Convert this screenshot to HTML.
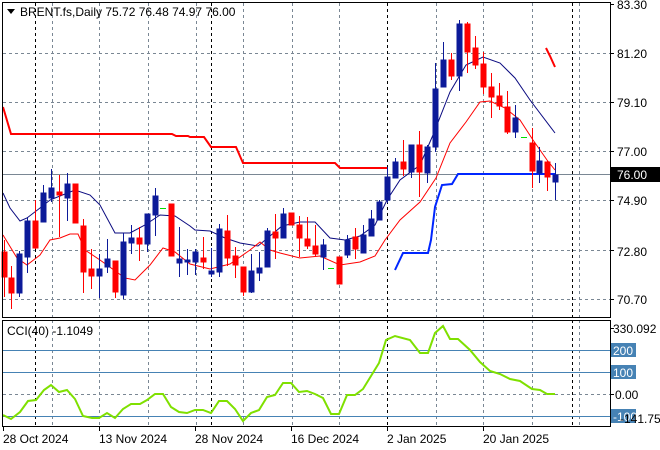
<!DOCTYPE html>
<html><head><meta charset="utf-8"><style>
html,body{margin:0;padding:0;background:#fff;width:660px;height:450px;overflow:hidden}
svg{display:block;font-family:"Liberation Sans",sans-serif}
</style></head><body>
<svg width="660" height="450" viewBox="0 0 660 450" xmlns="http://www.w3.org/2000/svg">
<rect width="660" height="450" fill="#fff"/>
<!-- grid main -->
<g stroke="#7a8794" stroke-width="1" stroke-dasharray="3,3" fill="none">
<path d="M3 53.5H610M3 102.5H610M3 151.5H610M3 200.5H610M3 250.5H610M3 299.5H610"/>
<path d="M52.5 3V317M99.5 3V317M148.5 3V317M196.5 3V317M243.5 3V317M292.5 3V317M339.5 3V317M436.5 3V317M483.5 3V317M532.5 3V317M579.5 3V317"/>
<path d="M52.5 320V426M99.5 320V426M148.5 320V426M196.5 320V426M243.5 320V426M292.5 320V426M339.5 320V426M436.5 320V426M483.5 320V426M532.5 320V426M579.5 320V426M3 394.5H610"/>
</g>
<g stroke="#000" stroke-width="1" stroke-dasharray="3,3">
<path d="M35.5 3V317M211.5 3V317M387.5 3V317M572.5 3V317M35.5 320V426M211.5 320V426M387.5 320V426M572.5 320V426"/>
</g>
<!-- 76 line -->
<path d="M3 174.5H610" stroke="#7a8794" stroke-width="1"/>
<!-- thick red step -->
<polyline fill="none" stroke="#f00" stroke-width="2" points="3,107 11,134 172,134 176,136 188,136 190,137 204,137 211,147 236,147 243,163 335,163 340,168 387,168"/>
<path d="M546 48 L550 56 L555 67" stroke="#f00" stroke-width="2" fill="none"/>
<!-- thick blue step -->
<polyline fill="none" stroke="#0026ff" stroke-width="2" points="395,270 403,253 428,253 431,240 435,207 442,185 452,184 458,174 555,174"/>
<!-- blue MA -->
<polyline fill="none" stroke="#0a0a80" stroke-width="1" points="3,193 10,208 20,221 27,218 40,208 50,200 60,196 75,190 90,195 100,205 115,233 130,233 145,225 160,215 175,216 190,226 195,230 210,231 225,238 240,243 258,246 270,236 282,226 300,222 315,222 330,238 345,240 360,236 375,225 387,200 400,180 420,165 433,135 450,92 466,65 483,57 500,63 515,78 530,100 555,133"/>
<!-- red MA -->
<polyline fill="none" stroke="#f00" stroke-width="1" points="3,235 17,258 27,265 40,255 50,240 60,238 70,234 78,234 85,250 100,260 125,278 135,280 150,265 163,248 175,252 190,264 210,269 230,264 250,250 260,242 270,250 280,253 300,258 320,256 340,265 360,262 375,256 385,240 400,220 420,202 436,178 450,143 466,122 480,102 490,101 505,108 520,120 533,140 547,160 555,170"/>
<!-- candles -->
<g stroke-width="1">
<g stroke="#f00" fill="#f00">
<path d="M4.5 240V297M11.5 266V309M35.5 200V249M59.5 175V237M75.5 184V222M83.5 219V293M91.5 249V289M115.5 261V298M139.5 227V261M171.5 204V256M203.5 237V269M227.5 215V266M235.5 247V278M243.5 267V296M275.5 214V259M291.5 213V220M299.5 216V257M307.5 217V249M315.5 225V256M339.5 257V284M355.5 228V259M403.5 140V176M419.5 131V197M451.5 53V80M467.5 22V73M475.5 36V69M483.5 52V94M491.5 73V118M499.5 83V110M507.5 91V134M532.5 128V188M547.5 161V191"/>
<rect x="2" y="252" width="5" height="25"/><rect x="9" y="278" width="5" height="15"/><rect x="33" y="221" width="5" height="27"/><rect x="57" y="192" width="5" height="3"/><rect x="73" y="184" width="5" height="39"/><rect x="81" y="226" width="5" height="46"/><rect x="89" y="269" width="5" height="7"/><rect x="113" y="261" width="5" height="31"/><rect x="137" y="238" width="5" height="6"/><rect x="169" y="204" width="5" height="52"/><rect x="201" y="258" width="5" height="4"/><rect x="225" y="231" width="5" height="27"/><rect x="233" y="256" width="5" height="9"/><rect x="241" y="267" width="5" height="25"/><rect x="273" y="232" width="5" height="6"/><rect x="289" y="213" width="5" height="12"/><rect x="297" y="225" width="5" height="13"/><rect x="305" y="239" width="5" height="7"/><rect x="313" y="246" width="5" height="8"/><rect x="337" y="257" width="5" height="27"/><rect x="353" y="237" width="5" height="12"/><rect x="401" y="162" width="5" height="7"/><rect x="417" y="145" width="5" height="27"/><rect x="449" y="60" width="5" height="16"/><rect x="465" y="24" width="5" height="28"/><rect x="473" y="48" width="5" height="17"/><rect x="481" y="64" width="5" height="23"/><rect x="489" y="87" width="5" height="10"/><rect x="497" y="96" width="5" height="10"/><rect x="505" y="107" width="5" height="25"/><rect x="530" y="143" width="5" height="28"/><rect x="545" y="162" width="5" height="15"/>
</g>
<g stroke="#0c1a99" fill="#0c1a99">
<path d="M19.5 251V297M27.5 217V273M43.5 185V222M51.5 169V202M67.5 173V221M99.5 254V298M107.5 239V273M123.5 233V299M131.5 225V254M147.5 214V252M155.5 188V236M179.5 227V277M187.5 249V275M195.5 249V275M211.5 248V277M219.5 224V277M251.5 254V293M259.5 252V281M267.5 228V267M283.5 208V238M323.5 239V270M347.5 235V258M363.5 225V253M371.5 210V236M379.5 200V220M387.5 167V203M395.5 158V178M411.5 145V178M427.5 145V183M435.5 63V152M443.5 42V87M459.5 20V91M515.5 105V138M539.5 147V183M555.5 163V200"/>
<rect x="17" y="254" width="5" height="39"/><rect x="25" y="221" width="5" height="36"/><rect x="41" y="193" width="5" height="29"/><rect x="49" y="188" width="5" height="10"/><rect x="65" y="184" width="5" height="14"/><rect x="97" y="269" width="5" height="7"/><rect x="105" y="259" width="5" height="8"/><rect x="121" y="242" width="5" height="53"/><rect x="129" y="238" width="5" height="5"/><rect x="145" y="214" width="5" height="30"/><rect x="153" y="196" width="5" height="19"/><rect x="177" y="259" width="5" height="4"/><rect x="185" y="260" width="5" height="2"/><rect x="193" y="252" width="5" height="10"/><rect x="209" y="271" width="5" height="3"/><rect x="217" y="229" width="5" height="43"/><rect x="249" y="271" width="5" height="21"/><rect x="257" y="268" width="5" height="5"/><rect x="265" y="231" width="5" height="36"/><rect x="281" y="214" width="5" height="24"/><rect x="321" y="245" width="5" height="12"/><rect x="345" y="240" width="5" height="15"/><rect x="361" y="235" width="5" height="18"/><rect x="369" y="219" width="5" height="17"/><rect x="377" y="202" width="5" height="18"/><rect x="385" y="177" width="5" height="23"/><rect x="393" y="162" width="5" height="16"/><rect x="409" y="145" width="5" height="27"/><rect x="425" y="147" width="5" height="26"/><rect x="433" y="89" width="5" height="58"/><rect x="441" y="60" width="5" height="27"/><rect x="457" y="24" width="5" height="52"/><rect x="513" y="118" width="5" height="14"/><rect x="537" y="161" width="5" height="12"/><rect x="553" y="175" width="5" height="7"/>
</g>
<path d="M160 208.5H166M328 268.5H334M521 137.5H527" stroke="#00e000"/>
</g>
<!-- CCI levels -->
<path d="M3 350.5H610M3 372.5H610M3 416.5H610" stroke="#4682b4" stroke-width="1"/>
<polyline fill="none" stroke="#7fe000" stroke-width="2" points="3,415 11,419 20,412 28,401 36,400 44,390 51,385 59,392 67,390 75,399 83,416 92,418 99,418 107,413 115,418 123,409 131,404 140,404 147,400 155,394 163,394 171,407 179,412 187,413 195,410 203,410 211,413 219,401 227,401 235,409 243,421 251,413 259,410 267,397 275,395 283,383 291,383 299,392 307,391 315,394 323,398 331,414 339,414 347,395 355,395 363,389 371,376 379,363 386,340 395,336 410,340 420,353 428,353 435,333 443,326 450,339 458,339 470,350 480,362 490,371 500,374 510,379 520,381 532,389 540,390 547,394 555,394"/>
<!-- borders -->
<rect x="2.5" y="2.5" width="608" height="315" fill="none" stroke="#000"/>
<rect x="2.5" y="320.5" width="608" height="106" fill="none" stroke="#000"/>
<path d="M610 4.5h4M610 53.5h4M610 102.5h4M610 151.5h4M610 200.5h4M610 250.5h4M610 299.5h4M610 328.5h4M610 350.5h4M610 372.5h4M610 394.5h4M610 416.5h4M3.5 427v4M99.5 427v4M195.5 427v4M291.5 427v4M387.5 427v4M483.5 427v4" stroke="#000"/>
<!-- titles -->
<path d="M7 9h8l-4 5z" fill="#000"/>
<text x="20" y="16" font-size="12" fill="#000">BRENT.fs,Daily  75.72 76.48 74.97 76.00</text>
<text x="7" y="335" font-size="12" fill="#000">CCI(40) -1.1049</text>
<!-- price axis -->
<g font-size="12" fill="#000">
<text x="617" y="9">83.30</text><text x="617" y="58">81.20</text><text x="617" y="107">79.10</text><text x="617" y="156">77.00</text><text x="617" y="205">74.90</text><text x="617" y="256">72.80</text><text x="617" y="304">70.70</text>
<text x="613" y="333">330.092</text><text x="615" y="399">0.00</text>
</g>
<rect x="611" y="167" width="49" height="15" fill="#000"/>
<text x="617" y="179" font-size="12" fill="#fff">76.00</text>
<rect x="611" y="343" width="25" height="14" fill="#4682b4"/><text x="613" y="355" font-size="12" fill="#fff">200</text>
<rect x="611" y="365" width="25" height="14" fill="#4682b4"/><text x="613" y="377" font-size="12" fill="#fff">100</text>
<rect x="611" y="409" width="25" height="14" fill="#4682b4"/><text x="613" y="421" font-size="12" fill="#fff">-100</text>
<text x="620" y="423" font-size="12" fill="#000">-141.753</text>
<!-- dates -->
<g font-size="12" fill="#000">
<text x="3" y="443">28 Oct 2024</text><text x="99" y="443">13 Nov 2024</text><text x="195" y="443">28 Nov 2024</text><text x="291" y="443">16 Dec 2024</text><text x="387" y="443">2 Jan 2025</text><text x="483" y="443">20 Jan 2025</text>
</g>
</svg>
</body></html>
